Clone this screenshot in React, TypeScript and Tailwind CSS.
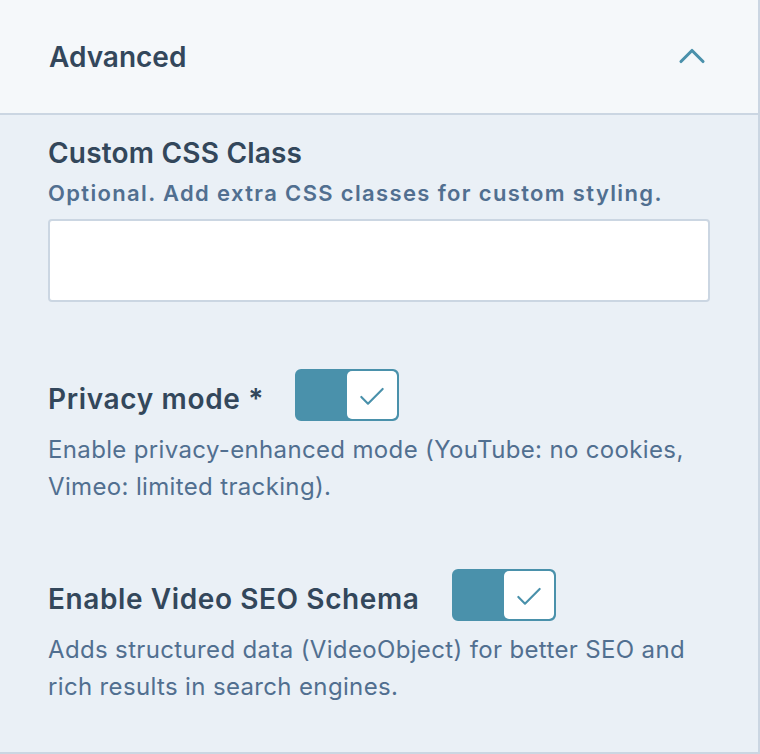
import { ChevronUp, Check } from "lucide-react";

const Toggle = () => (
  <div className="flex h-[52px] w-[104px] shrink-0 overflow-hidden rounded-[6px] border-2 border-[#4a91ab] bg-[#4a91ab]">
    <div className="flex-1" />
    <div className="flex w-[50px] items-center justify-center rounded-[5px] bg-white">
      <Check className="mt-[3px] h-[32px] w-[32px] text-[#4a91ab]" strokeWidth={1.6} />
    </div>
  </div>
);

export default function App() {
  return (
    <div
      className="h-[754px] w-[760px] overflow-hidden border-r-2 border-b-2 border-[#cbd6e2] bg-[#eaf0f6] text-[#33475b]"
      style={{ fontFamily: "Inter, 'Noto Sans', sans-serif" }}
    >
      <div className="flex h-[115px] items-center justify-between border-b-2 border-[#cbd6e2] bg-[#f5f8fa] pl-[49px] pr-[44px]">
        <h2 className="text-[28px] font-semibold">Advanced</h2>
        <ChevronUp className="-mt-[2px] h-[44px] w-[44px] text-[#4a91ab]" strokeWidth={1.7} />
      </div>

      <div className="px-[48px] pt-[20px]">
        <label className="block text-[28px] font-semibold leading-[36px] tracking-[0.2px]">
          Custom CSS Class
        </label>
        <p className="mt-[8px] text-[22px] font-semibold leading-[28px] tracking-[1.35px] text-[#516f90]">
          Optional. Add extra CSS classes for custom styling.
        </p>
        <input
          type="text"
          className="mt-[12px] h-[83px] w-[662px] rounded-[4px] border-2 border-[#cbd6e2] bg-white px-4 outline-none"
        />

        <div className="mt-[67px] flex items-center gap-[31px]">
          <span className="pt-[7px] text-[28px] font-semibold tracking-[0.65px]">Privacy mode *</span>
          <Toggle />
        </div>
        <p className="mt-[10px] text-[24px] leading-[37px] tracking-[0.35px] text-[#516f90]">
          Enable privacy-enhanced mode (YouTube: no cookies,
          <br />
          Vimeo: limited tracking).
        </p>

        <div className="mt-[64px] flex items-center gap-[33px]">
          <span className="pt-[7px] text-[28px] font-semibold tracking-[0.6px]">Enable Video SEO Schema</span>
          <Toggle />
        </div>
        <p className="mt-[10px] text-[24px] leading-[37px] tracking-[0.35px] text-[#516f90]">
          Adds structured data (VideoObject) for better SEO and
          <br />
          rich results in search engines.
        </p>
      </div>
    </div>
  );
}
